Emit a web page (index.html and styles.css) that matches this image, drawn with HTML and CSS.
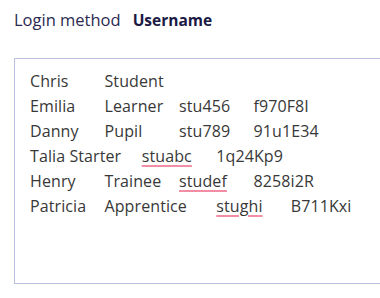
FILE: index.html
```html
<!DOCTYPE html>
<html lang="en">
<head>
  <meta charset="UTF-8">
  <title>Login method</title>
  <link rel="stylesheet" href="styles.css">
</head>
<body>

<!-- login method row -->
<div class="login-row">
  <span class="login-label">Login method</span>
  <span class="login-value">Username</span>
</div>

<!-- pasted roster, tab separated -->
<div class="roster">Chris	Student
Emilia	Learner	stu456	f970F8I
Danny	Pupil	stu789	91u1E34
Talia Starter	<span class="typo">stuabc</span>	1q24Kp9
Henry	Trainee	<span class="typo">studef</span>	8258i2R
Patricia	Apprentice	<span class="typo">stughi</span>	B711Kxi</div>

</body>
</html>
```

FILE: styles.css
```css
body {
  margin: 0;
  font-family: "Open Sans", "Noto Sans", sans-serif;
  background: #fff;
  overflow: hidden;
}
.login-row {
  display: flex;
  align-items: baseline;
  gap: 12px;
  padding: 0 14px;
  margin-top: 10px;
  height: 20px;
  line-height: 20px;
  font-size: 16px;
}
.login-label { color: #2a2950; font-size: 16.5px; }
.login-value { color: #1b1a44; font-weight: bold; font-size: 15.5px; }

.roster {
  margin: 28px 0 0 14px;
  width: 400px;
  height: 214px;
  padding: 10px 15px 0 15px;
  border: 1px solid #bcc1e2;
  font-size: 16px;
  letter-spacing: 0.1px;
  line-height: 25px;
  color: #383838;
  white-space: pre;
  tab-size: 37.25px;
}
/* spellcheck squiggle */
.typo {
  text-decoration: underline;
  text-decoration-color: #f28da5;
  text-decoration-thickness: 2px;
  text-underline-offset: 3px;
}
```
